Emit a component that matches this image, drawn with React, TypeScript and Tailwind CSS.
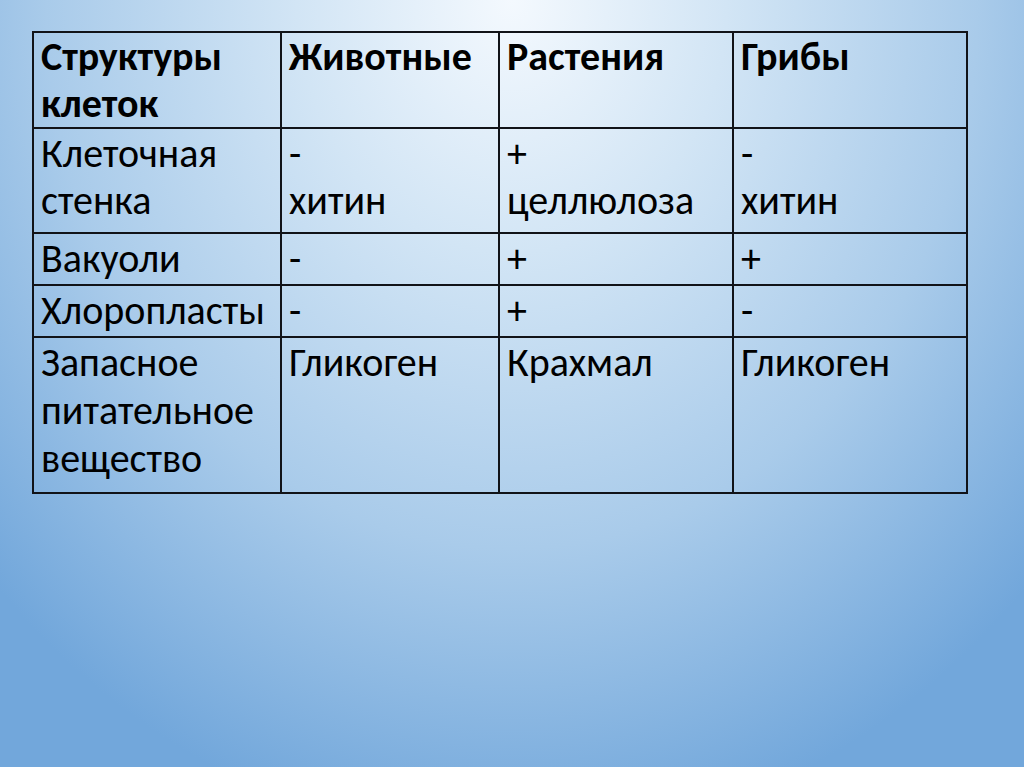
import React from 'react';

const rows: { cells: string[][]; h: string }[] = [
  { cells: [['Клеточная', 'стенка'], ['-', 'хитин'], ['+', 'целлюлоза'], ['-', 'хитин']], h: 'h-[105px]' },
  { cells: [['Вакуоли'], ['-'], ['+'], ['+']], h: 'h-[52px]' },
  { cells: [['Хлоропласты'], ['-'], ['+'], ['-']], h: 'h-[52px]' },
  { cells: [['Запасное', 'питательное', 'вещество'], ['Гликоген'], ['Крахмал'], ['Гликоген']], h: 'h-[156px]' },
];

const head = [['Структуры', 'клеток'], ['Животные'], ['Растения'], ['Грибы']];
const widths = ['w-[248px]', 'w-[218px]', 'w-[234px]', 'w-[234px]'];

export default function App() {
  return (
    <div
      className="w-[1024px] h-[767px] overflow-hidden bg-[radial-gradient(ellipse_70%_110%_at_50%_0%,#f4f9fe_0%,#d2e5f5_30%,#a9cbea_65%,#72a7db_100%)] pt-[31px] pl-[32px]"
      style={{ fontFamily: 'Carlito, Calibri, "Open Sans", sans-serif' }}
    >
      <table className="border-collapse border-2 border-[#111318] text-black text-[40px] leading-[47px]">
        <tbody>
          <tr className="h-[95px]">
            {head.map((c, i) => (
              <td key={i} className={`${widths[i]} border-2 border-[#111318] align-top px-[7px] py-0 font-bold`}>
                {c.map((l, j) => (
                  <div key={j}>{l}</div>
                ))}
              </td>
            ))}
          </tr>
          {rows.map((r, ri) => (
            <tr key={ri} className={r.h}>
              {r.cells.map((c, i) => (
                <td key={i} className={`${widths[i]} border-2 border-[#111318] align-top px-[7px] pt-[1px] pb-0`}>
                  {c.map((l, j) => (
                    <div key={j} className={ri === 3 ? 'leading-[48px]' : ''}>{l}</div>
                  ))}
                </td>
              ))}
            </tr>
          ))}
        </tbody>
      </table>
    </div>
  );
}
